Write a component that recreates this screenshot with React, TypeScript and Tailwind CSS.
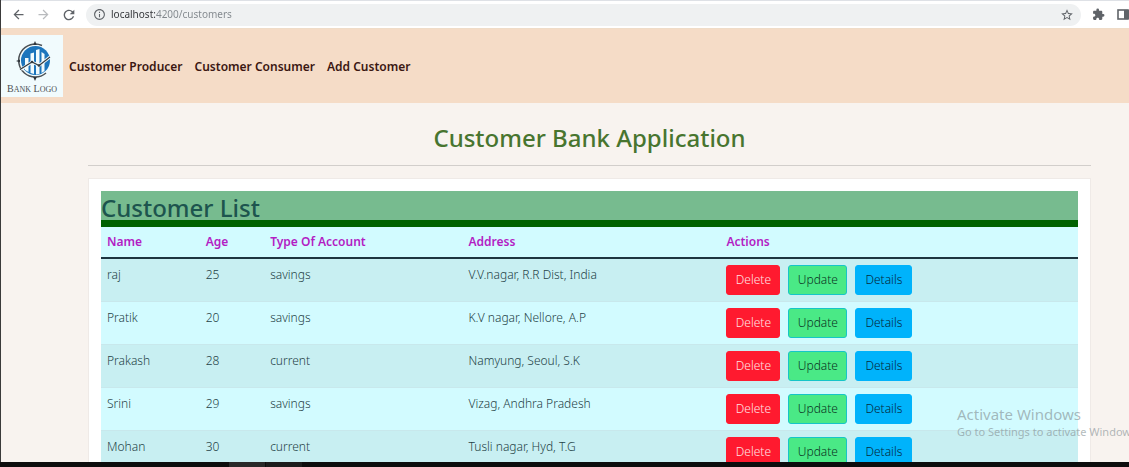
import React from "react";
import { MdArrowBack, MdArrowForward, MdRefresh, MdInfoOutline, MdStarBorder, MdExtension } from "react-icons/md";

type Customer = { name: string; age: number; account: string; address: string };

const customers: Customer[] = [
  { name: "raj", age: 25, account: "savings", address: "V.V.nagar, R.R Dist, India" },
  { name: "Pratik", age: 20, account: "savings", address: "K.V nagar, Nellore, A.P" },
  { name: "Prakash", age: 28, account: "current", address: "Namyung, Seoul, S.K" },
  { name: "Srini", age: 29, account: "savings", address: "Vizag, Andhra Pradesh" },
  { name: "Mohan", age: 30, account: "current", address: "Tusli nagar, Hyd, T.G" },
];

function BrowserBar() {
  return (
    <div className="flex h-7 shrink-0 items-center border-t border-[#dee1e6] bg-white pl-[10px] text-[#5f6368]">
      <button type="button" aria-label="Back" className="w-[25px] shrink-0">
        <MdArrowBack size={15} />
      </button>
      <button type="button" aria-label="Forward" className="w-[25px] shrink-0 text-[#b9bbbe]">
        <MdArrowForward size={15} />
      </button>
      <button type="button" aria-label="Reload" className="w-[25px] shrink-0">
        <MdRefresh size={16} />
      </button>
      <div className="flex h-[22px] flex-1 items-center rounded-full bg-[#eff1f2] pr-[7px] pl-[7px]">
        <MdInfoOutline size={13} className="shrink-0" />
        <input
          aria-label="Address"
          className="ml-[5px] min-w-0 flex-1 bg-[linear-gradient(90deg,#303236_44px,#80868b_44px)] bg-clip-text text-[10px] text-transparent outline-none"
          defaultValue="localhost:4200/customers"
        />
        <button type="button" aria-label="Bookmark">
          <MdStarBorder size={14} />
        </button>
      </div>
      <button type="button" aria-label="Extensions" className="ml-[11px] shrink-0">
        <MdExtension size={13} />
      </button>
      <button type="button" aria-label="Side panel" className="ml-[12px] shrink-0">
        <svg width="12" height="11" viewBox="0 0 12 11" fill="none">
          <rect x="1" y="1" width="10" height="9" stroke="currentColor" strokeWidth="1.6" />
          <rect x="7" y="1" width="5" height="9" fill="currentColor" />
        </svg>
      </button>
    </div>
  );
}

function BankLogo() {
  return (
    <svg width="62" height="62" viewBox="0 0 62 62" className="shrink-0" role="img" aria-label="Bank Logo">
      <rect width="62" height="62" fill="#f1fbfd" />
      <circle cx="34.500" cy="25.500" r="14.500" fill="#1c75bc" />
      <path d="M24 35V23h3.500v14zM29.500 38V18.500l3.500-1V39zM35 39.500V15l3.500-1v25zM40.500 38V17l3 2v17z" fill="#f1fbfd" />
      <path d="M41 10.500A16.500 16.500 0 1 0 45 38" fill="none" stroke="#4b5054" strokeWidth="1.500" />
      <path d="M34 6l1.800 4h-3.600zM34 46l-1.800-4h3.600zM15 26l4-1.500v3z" fill="#30363b" />
      <path d="M20 34.500l11-7.500 7 3.500 11-8.500" fill="none" stroke="#f1fbfd" strokeWidth="3" />
      <path d="M19 34.500l12-7.500 7 3.500 11-8.500" fill="none" stroke="#343a3f" strokeWidth="1.200" />
      <circle cx="31" cy="27" r="1.300" fill="#343a3f" />
      <circle cx="38" cy="30.500" r="1.300" fill="#343a3f" />
      <text x="31" y="57" textAnchor="middle" fill="#4b4f53" fontWeight="400" fontFamily="Liberation Serif, serif" fontSize="10">
        B<tspan fontSize="8">ANK</tspan> L<tspan fontSize="8">OGO</tspan>
      </text>
    </svg>
  );
}

function Navbar() {
  return (
    <nav className="flex h-[75px] shrink-0 items-center border-t border-[#efdcc8] bg-[#f5dcc7] text-[12px] font-semibold text-[#3b1712]">
      <BankLogo />
      <div className="ml-[6px] flex gap-3 pt-[2px]">
        <a href="#producer">Customer Producer</a>
        <a href="#consumer">Customer Consumer</a>
        <a href="#add">Add Customer</a>
      </div>
    </nav>
  );
}

const actionClass = "h-[30px] rounded-[3px] border text-[12px] leading-4";

function CustomerTable() {
  return (
    <table className="w-full table-fixed border-collapse bg-[#d2fbff] text-left text-[12px] leading-4 font-light text-[#1f3f46]">
      <colgroup>
        <col className="w-[10.1%]" />
        <col className="w-[6.6%]" />
        <col className="w-[20.3%]" />
        <col className="w-[26.4%]" />
        <col />
      </colgroup>
      <thead>
        <tr className="h-[31px] border-b-2 border-[#1d3540] text-[#b31dc4]">
          {["Name", "Age", "Type Of Account", "Address", "Actions"].map((h) => (
            <th key={h} scope="col" className="px-[6px] font-semibold">{h}</th>
          ))}
        </tr>
      </thead>
      <tbody>
        {customers.map((c) => (
          <tr key={c.name} className="h-[43px] border-b border-[#c8e8ec] align-top odd:bg-[#c8eff2]">
            <td className="px-[6px] pt-2">{c.name}</td>
            <td className="px-[6px] pt-2">{c.age}</td>
            <td className="px-[6px] pt-2">{c.account}</td>
            <td className="px-[6px] pt-2">{c.address}</td>
            <td className="px-[6px] pt-[6px]">
              <div className="flex gap-2">
                <button type="button" className={`${actionClass} w-[54px] border-[#ff1a2f] bg-[#ff1a2f] text-[#ffe3e6]`}>Delete</button>
                <button type="button" className={`${actionClass} w-[59px] border-[#16c5c8] bg-[#4ae986] text-[#0b3323]`}>Update</button>
                <button type="button" className={`${actionClass} w-[57px] border-[#00b3fb] bg-[#00b3fb] text-[#05283a]`}>Details</button>
              </div>
            </td>
          </tr>
        ))}
      </tbody>
    </table>
  );
}

export default function App() {
  return (
    <div className="relative flex h-screen flex-col overflow-hidden bg-[#0d0d0d] font-['Noto_Sans','Open_Sans',sans-serif]">
      <div className="flex min-h-0 flex-1 flex-col overflow-hidden border-l border-[#3a3a3a] bg-[#f8f3ef]">
        <BrowserBar />
        <Navbar />
        <main className="pr-[38px] pl-[87px]">
          <h1 className="flex h-[63px] items-center justify-center border-b border-[#d2cecb] pt-2 text-[24px] font-medium text-[#48752f]">
            Customer Bank Application
          </h1>
          <section className="mt-3 border border-[#efeae7] bg-white px-3 pt-3 pb-8">
            <h2 className="flex h-9 items-center border-b-7 border-[#006100] bg-[#77bb8f] pt-1 text-[24px] leading-7 font-medium text-[#1d544e]">
              Customer List
            </h2>
            <CustomerTable />
          </section>
        </main>
      </div>
      <div className="flex h-[5px] shrink-0 bg-[#0d0d0d] pl-[229px]">
        <div className="w-9 bg-[#292929]" />
        <div className="ml-px w-9 bg-[#1c1c1c]" />
      </div>
      <div className="pointer-events-none absolute bottom-[27px] left-[957px] whitespace-nowrap text-[#808b8f]/60">
        <p className="text-[15px] leading-5">Activate Windows</p>
        <p className="text-[11px] leading-4">Go to Settings to activate Windows.</p>
      </div>
    </div>
  );
}
